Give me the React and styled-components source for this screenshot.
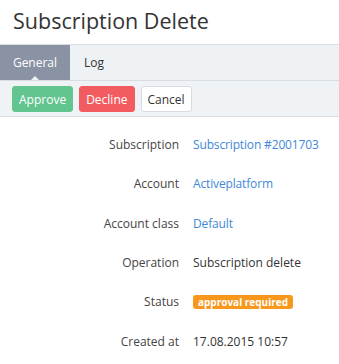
import styled, { createGlobalStyle } from 'styled-components';

const GlobalStyle = createGlobalStyle`
  html, body {
    margin: 0;
    padding: 0;
    background: #fff;
  }
  body {
    font-family: "Open Sans", "Liberation Sans", sans-serif;
    color: #333;
  }
`

const fields = [
  { label: 'Subscription', value: 'Subscription #2001703', kind: 'link' },
  { label: 'Account', value: 'Activeplatform', kind: 'link' },
  { label: 'Account class', value: 'Default', kind: 'link' },
  { label: 'Operation', value: 'Subscription delete', kind: 'text' },
  { label: 'Status', value: 'approval required', kind: 'badge' },
  { label: 'Created at', value: '17.08.2015 10:57', kind: 'text' },
]

const App = () => {
  return (
    <Page>
      <GlobalStyle />
      <Title>Subscription Delete</Title>
      <Tabs>
        <Tab $active>General</Tab>
        <Tab>Log</Tab>
      </Tabs>
      <Toolbar>
        <Button $variant="approve">Approve</Button>
        <Button $variant="decline">Decline</Button>
        <Button>Cancel</Button>
      </Toolbar>
      <Details>
        {fields.map((f) => (
          <Row key={f.label}>
            <Label>{f.label}</Label>
            <Value>
              {f.kind === 'link' && <Link href="#">{f.value}</Link>}
              {f.kind === 'text' && f.value}
              {f.kind === 'badge' && <Badge>{f.value}</Badge>}
            </Value>
          </Row>
        ))}
      </Details>
    </Page>
  )
}

export default App

const Page = styled.div`
  width: 339px;
  height: 364px;
  overflow: hidden;
`
const Title = styled.h1`
  margin: 0;
  padding: 6px 13px 0;
  height: 38px;
  font-size: 21.5px;
  font-weight: 400;
  line-height: 30px;
  color: #333;
`
const Tabs = styled.div`
  display: flex;
  height: 35px;
  background: #eff2f5;
  border-top: 1px solid #d8dde3;
  border-bottom: 1px solid #d8dde3;
`
const Tab = styled.div`
  position: relative;
  display: flex;
  align-items: center;
  justify-content: ${p => (p.$active ? 'center' : 'flex-start')};
  padding: ${p => (p.$active ? '0' : '0 14px')};
  width: ${p => (p.$active ? '70px' : 'auto')};
  box-sizing: border-box;
  font-size: 12px;
  color: ${p => (p.$active ? '#fff' : '#333')};
  background: ${p => (p.$active ? '#8a93a4' : 'transparent')};

  &::after {
    content: '';
    display: ${p => (p.$active ? 'block' : 'none')};
    position: absolute;
    left: 50%;
    bottom: 0;
    margin-left: -4px;
    border-left: 4px solid transparent;
    border-right: 4px solid transparent;
    border-bottom: 4px solid #eff2f5;
  }
`
const Toolbar = styled.div`
  display: flex;
  gap: 6px;
  padding: 5px 12px 4px;
  background: #f0f3f6;
  border-bottom: 1px solid #d8dde3;
`
const variants = {
  approve: { bg: '#62c48f', border: '#62c48f', color: '#fff' },
  decline: { bg: '#f25c60', border: '#f25c60', color: '#fff' },
  default: { bg: '#fff', border: '#d6dbe1', color: '#333' },
}
const Button = styled.button`
  height: 26px;
  padding: 0 6px;
  border-radius: 3px;
  font-family: "Open Sans", "Liberation Sans", sans-serif;
  font-size: 12px;
  cursor: pointer;
  background: ${p => variants[p.$variant || 'default'].bg};
  border: 1px solid ${p => variants[p.$variant || 'default'].border};
  color: ${p => variants[p.$variant || 'default'].color};
`
const Details = styled.div`
  display: flex;
  flex-direction: column;
  padding-top: 8px;
`
const Row = styled.div`
  display: grid;
  grid-template-columns: 179px 1fr;
  column-gap: 14px;
  height: 39.3px;
  align-items: center;
  font-size: 12px;
`
const Label = styled.div`
  text-align: right;
  color: #444;
`
const Value = styled.div`
  color: #333;
`
const Link = styled.a`
  color: #3e88d8;
  text-decoration: none;
  letter-spacing: -0.15px;
`
const Badge = styled.span`
  display: inline-block;
  padding: 0 5px;
  height: 14px;
  line-height: 14px;
  border-radius: 3px;
  background: #f7981d;
  color: #fff;
  font-size: 10px;
  font-weight: 700;
`
